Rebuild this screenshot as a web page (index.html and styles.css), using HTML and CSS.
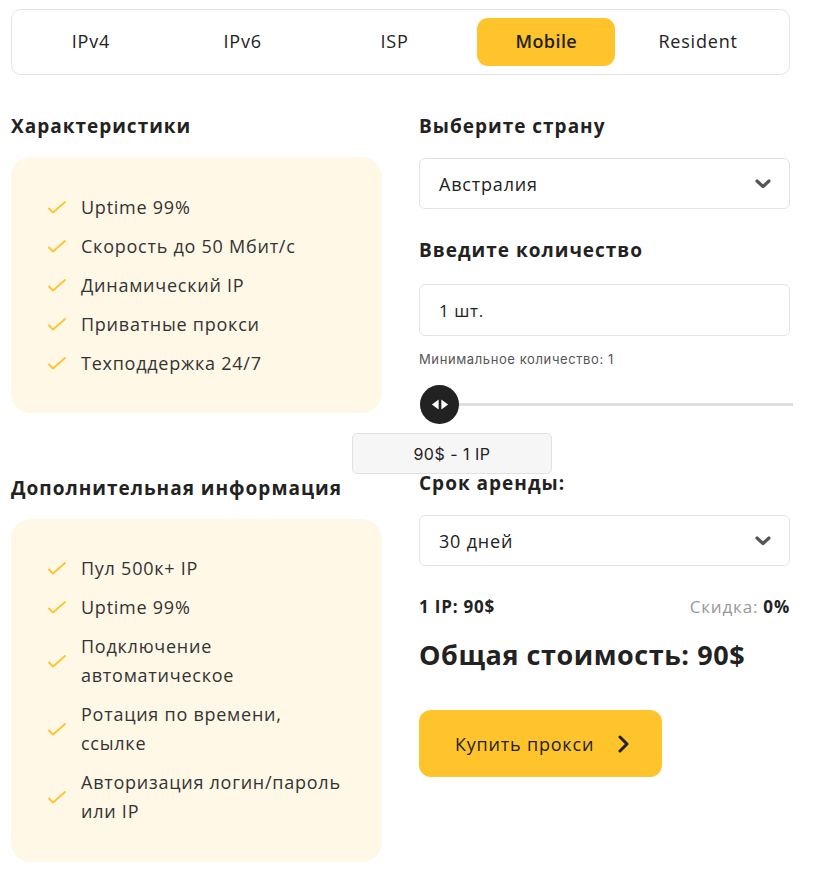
FILE: index.html
```html
<!DOCTYPE html>
<html lang="ru">
<head>
<meta charset="utf-8">
<link rel="stylesheet" href="styles.css">
</head>
<body>
<div class="page">
  <nav class="tabs">
    <div class="tab">IPv4</div>
    <div class="tab">IPv6</div>
    <div class="tab">ISP</div>
    <div class="tab active">Mobile</div>
    <div class="tab">Resident</div>
  </nav>

  <div class="grid">
    <div class="col-left">
      <h2 class="h">Характеристики</h2>
      <ul class="card card-1">
        <li><svg class="chk" viewBox="0 0 18 13"><polyline points="1,7.5 5,11.5 17,1" /></svg><span>Uptime 99%</span></li>
        <li><svg class="chk" viewBox="0 0 18 13"><polyline points="1,7.5 5,11.5 17,1" /></svg><span>Скорость до 50 Мбит/с</span></li>
        <li><svg class="chk" viewBox="0 0 18 13"><polyline points="1,7.5 5,11.5 17,1" /></svg><span>Динамический IP</span></li>
        <li><svg class="chk" viewBox="0 0 18 13"><polyline points="1,7.5 5,11.5 17,1" /></svg><span>Приватные прокси</span></li>
        <li><svg class="chk" viewBox="0 0 18 13"><polyline points="1,7.5 5,11.5 17,1" /></svg><span>Техподдержка 24/7</span></li>
      </ul>

      <h2 class="h h-second">Дополнительная информация</h2>
      <ul class="card card-2">
        <li><svg class="chk" viewBox="0 0 18 13"><polyline points="1,7.5 5,11.5 17,1" /></svg><span>Пул 500к+ IP</span></li>
        <li><svg class="chk" viewBox="0 0 18 13"><polyline points="1,7.5 5,11.5 17,1" /></svg><span>Uptime 99%</span></li>
        <li><svg class="chk" viewBox="0 0 18 13"><polyline points="1,7.5 5,11.5 17,1" /></svg><span>Подключение<br>автоматическое</span></li>
        <li><svg class="chk" viewBox="0 0 18 13"><polyline points="1,7.5 5,11.5 17,1" /></svg><span>Ротация по времени,<br>ссылке</span></li>
        <li><svg class="chk" viewBox="0 0 18 13"><polyline points="1,7.5 5,11.5 17,1" /></svg><span>Авторизация логин/пароль<br>или IP</span></li>
      </ul>
    </div>

    <div class="col-right">
      <h2 class="h">Выберите страну</h2>
      <div class="field select">
        <span>Австралия</span>
        <svg class="chev-down" viewBox="0 0 16 10"><polyline points="2,2 8,7.5 14,2" /></svg>
      </div>

      <h2 class="h h-qty">Введите количество</h2>
      <div class="field input"><span>1 шт.</span></div>
      <div class="hint">Минимальное количество: 1</div>

      <div class="slider">
        <div class="thumb">
          <svg viewBox="0 0 20 12"><polygon points="1,6 8.5,0.5 8.5,11.5" /><polygon points="19,6 11.5,0.5 11.5,11.5" /></svg>
        </div>
        <div class="track"></div>
        <div class="tooltip">90$ - 1 IP</div>
      </div>

      <h2 class="h h-term">Срок аренды:</h2>
      <div class="field select select-term">
        <span>30 дней</span>
        <svg class="chev-down" viewBox="0 0 16 10"><polyline points="2,2 8,7.5 14,2" /></svg>
      </div>

      <div class="price-row">
        <span class="per-ip">1 IP: 90$</span>
        <span class="discount">Скидка: <b>0%</b></span>
      </div>

      <div class="total">Общая стоимость: 90$</div>

      <button class="buy">
        <span>Купить прокси</span>
        <svg class="chev-right" viewBox="0 0 12 18"><polyline points="2,2 9,9 2,16" /></svg>
      </button>
    </div>
  </div>
</div>
</body>
</html>
```

FILE: styles.css
```css
* { box-sizing: border-box; }

body {
  margin: 0;
  background: #ffffff;
  font-family: "Open Sans", "Noto Sans", "Liberation Sans", sans-serif;
  color: #222222;
}

.page {
  padding: 9px 0 0 11px;
  width: 800px;
}

.tabs {
  width: 779px;
  height: 66px;
  border: 1px solid #e4e4e4;
  border-radius: 10px;
  display: grid;
  grid-template-columns: repeat(5, 1fr);
  gap: 14px;
  padding: 8px 22px 8px 10px;
}

.tab {
  display: flex;
  align-items: center;
  justify-content: center;
  font-size: 18px;
  color: #222;
  border-radius: 11px;
  letter-spacing: 0.8px;
  padding-bottom: 2px;
}

.tab.active {
  background: #ffc42b;
  font-weight: 600;
  letter-spacing: 0.4px;
}

.grid {
  display: grid;
  grid-template-columns: 371px 371px;
  column-gap: 37px;
  margin-top: 38px;
}

.h {
  margin: 0;
  font-size: 19px;
  font-weight: 700;
  line-height: 26px;
  color: #222;
  letter-spacing: 1px;
}

.card {
  list-style: none;
  margin: 18px 0 0;
  background: #fff8e7;
  border-radius: 20px;
  padding: 36px 0 0 37px;
}

.card-1 { height: 256px; }
.card-2 { height: 343px; padding-top: 35px; }

.card li {
  display: flex;
  align-items: center;
  font-size: 18px;
  line-height: 29px;
  color: #333;
  margin-bottom: 10px;
  letter-spacing: 0.75px;
}

.chk {
  width: 18px;
  height: 13px;
  flex: none;
  margin-right: 15px;
  fill: none;
  stroke: #ffc42b;
  stroke-width: 1.8;
  stroke-linecap: round;
  stroke-linejoin: round;
}

.h-second { margin-top: 62px; }

.field {
  margin-top: 19px;
  height: 51px;
  border: 1px solid #e3e3e3;
  border-radius: 6px;
  display: flex;
  align-items: center;
  justify-content: space-between;
  padding: 0 18px 0 19px;
  font-size: 18px;
  letter-spacing: 0.8px;
  color: #222;
}

.chev-down {
  width: 16px;
  height: 10px;
  fill: none;
  stroke: #555;
  stroke-width: 3.2;
  stroke-linecap: round;
  stroke-linejoin: round;
}

.h-qty { margin-top: 28px; }
.field.input { margin-top: 21px; height: 52px; font-size: 17px; letter-spacing: 0.6px; }

.hint {
  margin-top: 14px;
  font-family: Inter, "Open Sans", sans-serif;
  font-size: 13px;
  line-height: 18px;
  color: #555;
  letter-spacing: 0.6px;
}

.slider {
  position: relative;
  height: 39px;
  margin-top: 17px;
  width: 374px;
  display: flex;
  align-items: center;
}

.thumb {
  width: 39px;
  height: 39px;
  border-radius: 50%;
  background: #222;
  display: flex;
  align-items: center;
  justify-content: center;
  flex: none;
  position: relative;
  left: 1px;
}

.thumb svg {
  width: 18px;
  height: 11px;
  fill: #fff;
}

.track {
  flex: 1;
  height: 3px;
  background: #dedede;
}

.tooltip {
  position: absolute;
  left: -67px;
  top: 48px;
  width: 200px;
  height: 41px;
  background: #f6f6f6;
  border: 1px solid #e2e2e2;
  border-radius: 5px;
  display: flex;
  align-items: center;
  justify-content: center;
  font-family: Inter, "Open Sans", sans-serif;
  font-size: 16px;
  letter-spacing: 0.5px;
  color: #222;
  z-index: 2;
}

.h-term { margin-top: 46px; }
.select-term { margin-top: 19px; }

.price-row {
  margin-top: 30px;
  display: flex;
  justify-content: space-between;
  font-size: 17px;
  line-height: 22px;
  letter-spacing: 0.8px;
}

.per-ip { font-weight: 700; }
.discount { color: #999; }
.discount b { color: #222; font-weight: 700; }

.total {
  margin-top: 19px;
  font-size: 27px;
  line-height: 36px;
  font-weight: 700;
  color: #222;
  letter-spacing: 0.55px;
}

.buy {
  margin-top: 37px;
  width: 243px;
  height: 67px;
  border: none;
  border-radius: 12px;
  background: #ffc42b;
  display: flex;
  align-items: center;
  padding: 0 0 0 36px;
  font-family: inherit;
  font-size: 18px;
  letter-spacing: 0.8px;
  color: #222;
  cursor: pointer;
}

.chev-right {
  width: 12px;
  height: 18px;
  margin-left: 24px;
  fill: none;
  stroke: #222;
  stroke-width: 3;
  stroke-linecap: round;
  stroke-linejoin: round;
}
```
